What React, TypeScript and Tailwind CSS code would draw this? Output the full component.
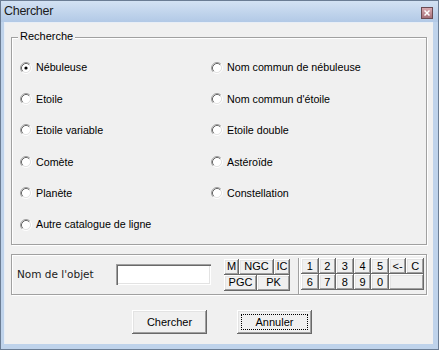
import React from "react";

const font = { fontFamily: '"Liberation Sans", Arial, sans-serif' };

const bevel =
  "shadow-[inset_-1px_-1px_0_#696969,inset_1px_1px_0_#ffffff,inset_-2px_-2px_0_#a0a0a0,inset_2px_2px_0_#e3e3e3]";

function Radio({ checked }: { checked?: boolean }) {
  return (
    <svg width="12" height="12" viewBox="0 0 12 12" className="shrink-0">
      <circle cx="6" cy="6" r="4.2" fill="#fff" />
      <path d="M2.11 9.89 A5.5 5.5 0 0 1 9.89 2.11" stroke="#a0a0a0" fill="none" />
      <path d="M9.89 2.11 A5.5 5.5 0 0 1 2.11 9.89" stroke="#ffffff" fill="none" />
      <path d="M2.82 9.18 A4.5 4.5 0 0 1 9.18 2.82" stroke="#696969" fill="none" />
      <path d="M9.18 2.82 A4.5 4.5 0 0 1 2.82 9.18" stroke="#e3e3e3" fill="none" />
      {checked && <circle cx="6" cy="6" r="1.6" fill="#000" />}
    </svg>
  );
}

function Option({ label, checked }: { label: string; checked?: boolean }) {
  return (
    <div className="flex items-center gap-[4px] h-[31.4px]">
      <Radio checked={checked} />
      <span className="text-[10.7px] text-black leading-none">{label}</span>
    </div>
  );
}

function Key({ label, className = "" }: { label: string; className?: string }) {
  return (
    <div
      className={`flex items-center justify-center bg-[#f0f0f0] text-[11px] text-black leading-none ${bevel} ${className}`}
    >
      {label}
    </div>
  );
}

const left = ["Nébuleuse", "Etoile", "Etoile variable", "Comète", "Planète", "Autre catalogue de ligne"];
const right = ["Nom commun de nébuleuse", "Nom commun d'étoile", "Etoile double", "Astéroïde", "Constellation"];

export default function App() {
  return (
    <div
      className="w-[439px] h-[350px] flex flex-col bg-[#bfd3eb] border border-[#6b7d94] overflow-hidden"
      style={font}
    >
      {/* title bar */}
      <div className="h-[21px] flex items-center justify-between pl-[3px] pr-[5px] bg-gradient-to-b from-[#d3e2f3] to-[#b2c9e6]">
        <span className="text-[12.5px] tracking-[-0.3px] text-[#1b1b1b] leading-none">Chercher</span>
        <div className="w-[12px] h-[12px] mt-[2px] border border-[#6a4a52] bg-gradient-to-b from-[#d9aab1] to-[#a46f78] flex items-center justify-center">
          <svg width="6" height="6" viewBox="0 0 6 6">
            <path d="M0.5 0.5 L5.5 5.5 M5.5 0.5 L0.5 5.5" stroke="#fff" strokeWidth="1.5" />
          </svg>
        </div>
      </div>

      {/* body */}
      <div className="flex-1 ml-[3px] mr-[5px] mb-[5px] bg-[#f0f0f0] border-l border-t border-[#e8eef6] pt-[14px] pl-[6px]">
        {/* Recherche group */}
        <div className="relative w-[416px] h-[208px] border border-[#a0a0a0] shadow-[1px_1px_0_#fff,inset_1px_1px_0_#fff]">
          <span className="absolute -top-[7px] left-[6px] px-[2px] bg-[#f0f0f0] text-[11px] leading-none text-black">
            Recherche
          </span>
          <div className="grid grid-cols-[191px_1fr] pl-[8px] pt-[14px]">
            <div className="flex flex-col">
              {left.map((l, i) => (
                <Option key={l} label={l} checked={i === 0} />
              ))}
            </div>
            <div className="flex flex-col">
              {right.map((l) => (
                <Option key={l} label={l} />
              ))}
            </div>
          </div>
        </div>

        {/* object name group */}
        <div className="mt-[9px] w-[416px] h-[41px] border border-[#a0a0a0] shadow-[1px_1px_0_#fff,inset_1px_1px_0_#fff] flex items-center pl-[5px]">
          <span
            className="w-[99px] text-[10.5px] text-[#1b1b1b] leading-none"
            style={{ fontFamily: '"DejaVu Sans", Verdana, sans-serif' }}
          >
            Nom de l'objet
          </span>
          <div className="w-[95px] h-[21px] bg-white shadow-[inset_1px_1px_0_#a0a0a0,inset_2px_2px_0_#696969,inset_-1px_-1px_0_#fff,inset_-2px_-2px_0_#e3e3e3]" />
          <div className="ml-[13px] flex flex-col">
            <div className="flex h-[16px]">
              <Key label="M" className="w-[15px]" />
              <Key label="NGC" className="w-[35px]" />
              <Key label="IC" className="w-[16px]" />
            </div>
            <div className="flex h-[16px]">
              <Key label="PGC" className="w-[33px]" />
              <Key label="PK" className="w-[33px]" />
            </div>
          </div>
          <div className="self-stretch mt-[3px] ml-[8px] pl-[2px] border-l border-[#a0a0a0] shadow-[inset_1px_0_0_#fff]">
            <div className="grid grid-cols-7 grid-rows-[16px_16px] w-[123px]">
              {["1", "2", "3", "4", "5", "<-", "C", "6", "7", "8", "9", "0"].map((k) => (
                <Key key={k} label={k} />
              ))}
              <Key label="" className="col-span-2" />
            </div>
          </div>
        </div>

        {/* action buttons */}
        <div className="flex mt-[15px] ml-[121px] gap-[30px]">
          <button className={`w-[75px] h-[24px] bg-[#f0f0f0] text-[11px] text-black ${bevel}`}>
            Chercher
          </button>
          <button className={`relative w-[75px] h-[24px] bg-[#f0f0f0] text-[11px] text-black ${bevel}`}>
            Annuler
            <span className="absolute inset-[4px] border border-dotted border-black" />
          </button>
        </div>
      </div>
    </div>
  );
}
